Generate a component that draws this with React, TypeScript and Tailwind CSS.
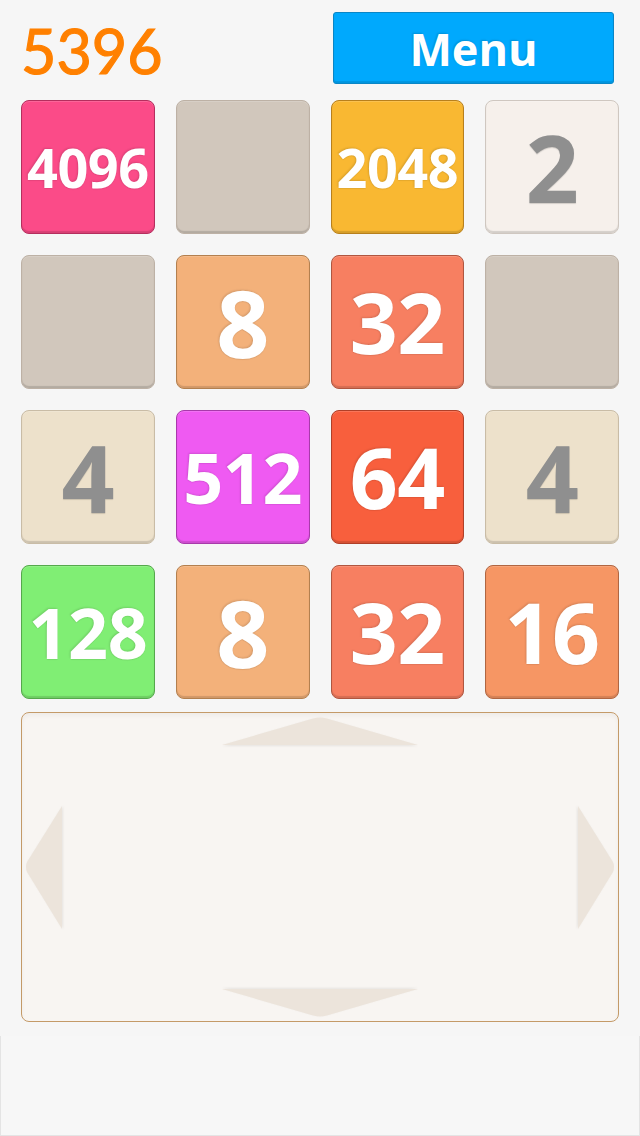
import React from "react";

type Tile = { v: number | null };

const board: (number | null)[][] = [
  [4096, null, 2048, 2],
  [null, 8, 32, null],
  [4, 512, 64, 4],
  [128, 8, 32, 16],
];

// tile background per value, written out so tailwind picks them up
const tileBg: Record<string, string> = {
  empty: "bg-[#d1c7bc] border-[#bdb1a5]",
  "2": "bg-[#f6f0eb] border-[#cfc7c0]",
  "4": "bg-[#ede1cb] border-[#c9bca6]",
  "8": "bg-[#f3b17a] border-[#b3804f]",
  "16": "bg-[#f69664] border-[#b06642]",
  "32": "bg-[#f77f61] border-[#b05640]",
  "64": "bg-[#f85f3d] border-[#b04028]",
  "128": "bg-[#80ee74] border-[#55a84c]",
  "512": "bg-[#ef5af2] border-[#a83aab]",
  "2048": "bg-[#f9b832] border-[#b8801c]",
  "4096": "bg-[#fb4b88] border-[#b52e5e]",
};

function sizeFor(v: number) {
  const n = String(v).length;
  if (n === 1) return "text-[93px]";
  if (n === 2) return "text-[84px]";
  if (n === 3) return "text-[70px]";
  return "text-[54px]";
}

function Cell({ v }: Tile) {
  const key = v === null ? "empty" : String(v);
  const dark = v === 2 || v === 4;
  return (
    <div
      className={`flex h-[134px] items-center justify-center rounded-[8px] border shadow-[inset_0_-2px_1px_rgba(0,0,0,0.14),inset_0_1px_0_rgba(255,255,255,0.15)] ${tileBg[key]}`}
    >
      {v !== null ? (
        <span
          className={`font-bold leading-none tracking-[-0.5px] ${sizeFor(v)} ${
            dark
              ? "text-[#8f8f8f] [text-shadow:0_1px_1px_rgba(0,0,0,0.15)]"
              : "text-white [text-shadow:-1px_-1px_2px_rgba(0,0,0,0.12),0_1px_1px_rgba(0,0,0,0.08)]"
          }`}
          style={{ fontFamily: '"Open Sans", "Liberation Sans", sans-serif' }}
        >
          {v}
        </span>
      ) : null}
    </div>
  );
}

function ArrowUp() {
  return (
    <svg width="196" height="30" viewBox="0 0 196 30" className="drop-shadow-[0_1px_1px_rgba(0,0,0,0.07)]">
      <path d="M0 29 L91 2.5 Q98 0.5 105 2.5 L196 29 Z" fill="#ece4db" />
    </svg>
  );
}

function ArrowDown() {
  return (
    <svg width="196" height="30" viewBox="0 0 196 30" className="drop-shadow-[0_-1px_1px_rgba(0,0,0,0.07)]">
      <path d="M0 0 L91 26.5 Q98 28.5 105 26.5 L196 0 Z" fill="#ece4db" />
    </svg>
  );
}

function ArrowLeft() {
  return (
    <svg width="38" height="124" viewBox="0 0 38 124" className="drop-shadow-[1px_0_1px_rgba(0,0,0,0.07)]">
      <path d="M37 0 L2 56 Q0 61 2 66 L37 123 Z" fill="#ece4db" />
    </svg>
  );
}

function ArrowRight() {
  return (
    <svg width="38" height="124" viewBox="0 0 38 124" className="drop-shadow-[-1px_0_1px_rgba(0,0,0,0.07)]">
      <path d="M1 0 L36 56 Q38 61 36 66 L1 123 Z" fill="#ece4db" />
    </svg>
  );
}

export default function App() {
  return (
    <div className="flex h-[1136px] w-[640px] flex-col overflow-hidden bg-[#f6f6f6]">
      {/* header */}
      <div className="mt-[12px] flex h-[72px] items-center pl-[21px] pr-[26px]">
        <span
          className="pt-[4px] text-[61px] leading-none text-[#ff8000] [-webkit-text-stroke:1.2px_#ff8000]"
          style={{ fontFamily: 'Lato, "Noto Sans", sans-serif' }}
        >
          5396
        </span>
        <button
          className="ml-auto flex h-[72px] w-[281px] items-center justify-center rounded-[3px] border border-[#0a86c6] bg-[#00a9fd] shadow-[inset_0_-2px_1px_rgba(0,0,0,0.12)]"
        >
          <span
            className="text-[45px] font-bold leading-none text-white [text-shadow:-1px_-1px_2px_rgba(0,0,0,0.15)]"
            style={{ fontFamily: '"Open Sans", "Liberation Sans", sans-serif' }}
          >
            Menu
          </span>
        </button>
      </div>

      {/* board */}
      <div className="mt-[16px] grid grid-cols-4 gap-[21px] px-[21px]">
        {board.flat().map((v, i) => (
          <Cell key={i} v={v} />
        ))}
      </div>

      {/* swipe pad */}
      <div className="mx-[21px] mt-[13px] flex h-[310px] flex-col items-center rounded-[8px] border border-[#c49a68] bg-[#f8f5f2] px-[3px] pb-[2px] pt-[3px] shadow-[inset_0_3px_4px_rgba(0,0,0,0.04)]">
        <ArrowUp />
        <div className="flex w-full flex-1 items-center justify-between">
          <ArrowLeft />
          <ArrowRight />
        </div>
        <ArrowDown />
      </div>

      {/* bottom strip */}
      <div className="mt-[14px] h-[100px] border-x border-b border-[#e4e4e4] bg-[#f7f7f7]" />
    </div>
  );
}
